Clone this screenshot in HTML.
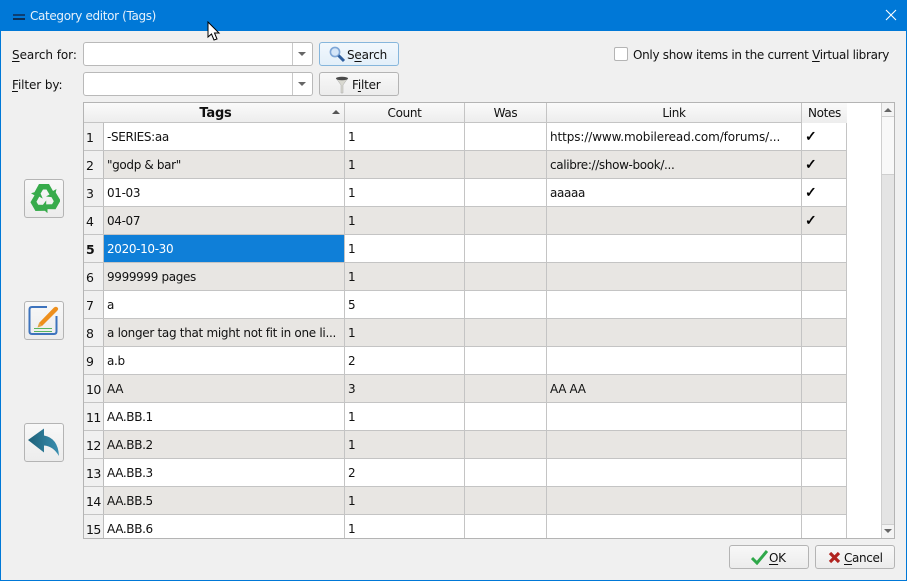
<!DOCTYPE html>
<html><head><meta charset="utf-8"><style>
html,body{margin:0;padding:0}
body{width:907px;height:581px;overflow:hidden;position:relative;background:#f0f0f0;font:12px "DejaVu Sans",sans-serif;color:#111;letter-spacing:-.35px}
div,span.a{position:absolute;box-sizing:border-box}
.t{white-space:nowrap;line-height:16px}
.btn{border:1px solid #b4b4b4;border-radius:3px;background:linear-gradient(#f8f8f8,#ececec)}
.inp{border:1px solid #b9b9b9;border-radius:3px;background:#fff}
.arr{width:0;height:0;border-left:4px solid transparent;border-right:4px solid transparent;border-top:4px solid #666}
.row{left:84px;width:763px;height:28px;border-bottom:1px solid #c4c4c4;background:#fff}
.row.e{background:#e8e6e3}
.vh{left:0;top:0;width:20px;height:27px;background:#f0f0f0;border-right:1px solid #bdbdbd;padding:7px 0 0 2px;line-height:16px;white-space:nowrap;font-size:12.5px;letter-spacing:-.6px}
.c{top:0;height:27px;border-right:1px solid #c4c4c4;padding:6px 0 0 3px;line-height:16px;white-space:nowrap}
.k{font-size:14px;-webkit-text-stroke:.5px #000;color:#000}
.hd{top:103px;height:20px;background:linear-gradient(#fafafa,#ededed);border-right:1px solid #c4c4c4;border-bottom:1px solid #c4c4c4;text-align:center;line-height:21px;white-space:nowrap}
u{text-decoration:underline;text-underline-offset:2px}
</style></head><body>
<div style="left:0;top:0;width:907px;height:31px;background:#0078d7"></div>
<div style="left:0;top:31px;width:1px;height:550px;background:#0078d7"></div>
<div style="left:906px;top:31px;width:1px;height:550px;background:#0078d7"></div>
<div style="left:0;top:580px;width:907px;height:1px;background:#0078d7"></div>
<div style="left:13px;top:14px;width:12px;height:2px;background:#0d3f73"></div>
<div style="left:13px;top:18px;width:12px;height:2px;background:#0d2f55"></div>
<div class="t" style="left:30px;top:8px;color:#e6f1fb">Category editor (Tags)</div>
<svg style="position:absolute;left:885px;top:9px" width="12" height="12"><path d="M1 1L11 11M11 1L1 11" stroke="#fff" stroke-width="1.1" fill="none"/></svg>

<div class="t" style="left:12px;top:47px;letter-spacing:-.05px"><u>S</u>earch for:</div>
<div class="t" style="left:12px;top:77px;letter-spacing:-.1px"><u>F</u>ilter by:</div>
<div class="inp" style="left:83px;top:42px;width:230px;height:24px"></div>
<div style="left:292px;top:43px;width:1px;height:22px;background:#c8c8c8"></div>
<div class="arr" style="left:298px;top:52px"></div>
<div class="inp" style="left:83px;top:72px;width:230px;height:24px"></div>
<div style="left:292px;top:73px;width:1px;height:22px;background:#c8c8c8"></div>
<div class="arr" style="left:298px;top:82px"></div>
<div class="btn" style="left:319px;top:42px;width:80px;height:24px;border-color:#86b6dc;background:linear-gradient(#f2f8fd,#e3eff9)"></div>
<svg style="position:absolute;left:328px;top:45px" width="18" height="18"><circle cx="7" cy="7" r="4.6" fill="#d5e6f8" stroke="#7fa6d6" stroke-width="1.6"/><path d="M10.5 10.5L16 16" stroke="#2f5f9f" stroke-width="3"/></svg>
<div class="t" style="left:347px;top:47px;letter-spacing:-.2px">S<u>e</u>arch</div>
<div class="btn" style="left:319px;top:72px;width:80px;height:24px"></div>
<svg style="position:absolute;left:335px;top:76px" width="14" height="18"><path d="M1 2H13L8 9V17H6V9Z" fill="#d8d8d0" stroke="#aaa" stroke-width=".5"/><ellipse cx="7" cy="2.500" rx="6" ry="1.800" fill="#4a4a4a"/></svg>
<div class="t" style="left:352px;top:77px;letter-spacing:-.2px">F<u>i</u>lter</div>
<div style="left:614px;top:47px;width:14px;height:14px;background:#fff;border:1px solid #b4b4b4;border-radius:2px"></div>
<div class="t" style="left:633px;top:47px;letter-spacing:-.31px">Only show items in the current <u>V</u>irtual library</div>

<div style="left:83px;top:102px;width:812px;height:437px;border:1px solid #b4b4b4;background:#fff"></div>
<div class="hd" style="left:84px;width:261px;font-weight:bold;font-size:13px;letter-spacing:-.2px;padding-left:4px;line-height:22px"><span style="margin-left:-1px">Tags</span></div>
<div style="left:332px;top:110px;width:0;height:0;border-left:4px solid transparent;border-right:4px solid transparent;border-bottom:4px solid #555"></div>
<div class="hd" style="left:345px;width:120px">Count</div>
<div class="hd" style="left:465px;width:82px">Was</div>
<div class="hd" style="left:547px;width:255px">Link</div>
<div class="hd" style="left:802px;width:45px;border-right:0;border-bottom:0">Notes</div>

<div class="row" style="top:123px"><div class="vh">1</div><div class="c" style="left:20px;width:241px">-SERIES:aa</div><div class="c" style="left:261px;width:120px">1</div><div class="c" style="left:381px;width:82px"></div><div class="c" style="left:463px;width:255px;letter-spacing:-.1px">https://www.mobileread.com/forums/...</div><div class="c k" style="left:718px;width:45px">✓</div></div>
<div class="row e" style="top:151px"><div class="vh">2</div><div class="c" style="left:20px;width:241px">"godp &amp; bar"</div><div class="c" style="left:261px;width:120px">1</div><div class="c" style="left:381px;width:82px"></div><div class="c" style="left:463px;width:255px">calibre://show-book/...</div><div class="c k" style="left:718px;width:45px">✓</div></div>
<div class="row" style="top:179px"><div class="vh">3</div><div class="c" style="left:20px;width:241px">01-03</div><div class="c" style="left:261px;width:120px">1</div><div class="c" style="left:381px;width:82px"></div><div class="c" style="left:463px;width:255px">aaaaa</div><div class="c k" style="left:718px;width:45px">✓</div></div>
<div class="row e" style="top:207px"><div class="vh">4</div><div class="c" style="left:20px;width:241px">04-07</div><div class="c" style="left:261px;width:120px">1</div><div class="c" style="left:381px;width:82px"></div><div class="c" style="left:463px;width:255px"></div><div class="c k" style="left:718px;width:45px">✓</div></div>
<div class="row" style="top:235px"><div class="vh" style="font-weight:bold">5</div><div class="c" style="left:20px;width:241px;background:#0f7fd8;color:#fff">2020-10-30</div><div class="c" style="left:261px;width:120px">1</div><div class="c" style="left:381px;width:82px"></div><div class="c" style="left:463px;width:255px"></div><div class="c" style="left:718px;width:45px"></div></div>
<div class="row e" style="top:263px"><div class="vh">6</div><div class="c" style="left:20px;width:241px">9999999 pages</div><div class="c" style="left:261px;width:120px">1</div><div class="c" style="left:381px;width:82px"></div><div class="c" style="left:463px;width:255px"></div><div class="c" style="left:718px;width:45px"></div></div>
<div class="row" style="top:291px"><div class="vh">7</div><div class="c" style="left:20px;width:241px">a</div><div class="c" style="left:261px;width:120px">5</div><div class="c" style="left:381px;width:82px"></div><div class="c" style="left:463px;width:255px"></div><div class="c" style="left:718px;width:45px"></div></div>
<div class="row e" style="top:319px"><div class="vh">8</div><div class="c" style="left:20px;width:241px;letter-spacing:-.3px">a longer tag that might not fit in one li...</div><div class="c" style="left:261px;width:120px">1</div><div class="c" style="left:381px;width:82px"></div><div class="c" style="left:463px;width:255px"></div><div class="c" style="left:718px;width:45px"></div></div>
<div class="row" style="top:347px"><div class="vh">9</div><div class="c" style="left:20px;width:241px">a.b</div><div class="c" style="left:261px;width:120px">2</div><div class="c" style="left:381px;width:82px"></div><div class="c" style="left:463px;width:255px"></div><div class="c" style="left:718px;width:45px"></div></div>
<div class="row e" style="top:375px"><div class="vh">10</div><div class="c" style="left:20px;width:241px">AA</div><div class="c" style="left:261px;width:120px">3</div><div class="c" style="left:381px;width:82px"></div><div class="c" style="left:463px;width:255px">AA AA</div><div class="c" style="left:718px;width:45px"></div></div>
<div class="row" style="top:403px"><div class="vh">11</div><div class="c" style="left:20px;width:241px">AA.BB.1</div><div class="c" style="left:261px;width:120px">1</div><div class="c" style="left:381px;width:82px"></div><div class="c" style="left:463px;width:255px"></div><div class="c" style="left:718px;width:45px"></div></div>
<div class="row e" style="top:431px"><div class="vh">12</div><div class="c" style="left:20px;width:241px">AA.BB.2</div><div class="c" style="left:261px;width:120px">1</div><div class="c" style="left:381px;width:82px"></div><div class="c" style="left:463px;width:255px"></div><div class="c" style="left:718px;width:45px"></div></div>
<div class="row" style="top:459px"><div class="vh">13</div><div class="c" style="left:20px;width:241px">AA.BB.3</div><div class="c" style="left:261px;width:120px">2</div><div class="c" style="left:381px;width:82px"></div><div class="c" style="left:463px;width:255px"></div><div class="c" style="left:718px;width:45px"></div></div>
<div class="row e" style="top:487px"><div class="vh">14</div><div class="c" style="left:20px;width:241px">AA.BB.5</div><div class="c" style="left:261px;width:120px">1</div><div class="c" style="left:381px;width:82px"></div><div class="c" style="left:463px;width:255px"></div><div class="c" style="left:718px;width:45px"></div></div>
<div class="row" style="top:515px;height:23px;border-bottom:0"><div class="vh" style="height:23px">15</div><div class="c" style="left:20px;width:241px;height:23px">AA.BB.6</div><div class="c" style="left:261px;width:120px;height:23px">1</div><div class="c" style="left:381px;width:82px;height:23px"></div><div class="c" style="left:463px;width:255px;height:23px"></div><div class="c" style="left:718px;width:45px;height:23px"></div></div>

<div style="left:881px;top:103px;width:13px;height:435px;background:#e4e4e4;border-left:1px solid #cfcfcf"></div>
<div style="left:881px;top:103px;width:13px;height:14px;background:#f4f4f4;border-left:1px solid #cfcfcf;border-bottom:1px solid #cfcfcf"></div>
<div style="left:881px;top:117px;width:13px;height:58px;background:#f8f8f8;border-left:1px solid #cfcfcf;border-bottom:1px solid #cfcfcf"></div>
<div style="left:881px;top:524px;width:13px;height:14px;background:#f4f4f4;border-left:1px solid #cfcfcf;border-top:1px solid #cfcfcf"></div>
<div style="left:884px;top:108px;width:0;height:0;border-left:4px solid transparent;border-right:4px solid transparent;border-bottom:4px solid #666"></div>
<div style="left:884px;top:529px;width:0;height:0;border-left:4px solid transparent;border-right:4px solid transparent;border-top:4px solid #666"></div>

<div class="btn" style="left:24px;top:179px;width:40px;height:39px"></div>
<svg style="position:absolute;left:30px;top:181px" width="30" height="32" viewBox="0 0 30 32"><defs></defs><g fill="#37ab4b"><path id="r1" d="M3.500 13L9 3H19L23 10L26.500 8L24.500 16.500L16 15.500L19.500 13.500L16.500 8.500H13L8.500 16Z"/><path d="M3.500 13L9 3H19L23 10L26.500 8L24.500 16.500L16 15.500L19.500 13.500L16.500 8.500H13L8.500 16Z" transform="rotate(120 15 17.500)"/><path d="M3.500 13L9 3H19L23 10L26.500 8L24.500 16.500L16 15.500L19.500 13.500L16.500 8.500H13L8.500 16Z" transform="rotate(240 15 17.500)"/></g></svg>
<div class="btn" style="left:24px;top:301px;width:40px;height:39px"></div>
<svg style="position:absolute;left:26px;top:303px" width="36" height="36" viewBox="0 0 36 36"><path d="M21 4H6Q3.500 4 3.500 6.500V28.500Q3.500 31 6 31H28Q30.500 31 30.500 28.500V13" fill="none" stroke="#3d73bd" stroke-width="2"/><path d="M13 20L28 4.500Q30 3 31.500 4.500Q33 6 31 8L16 23Z" fill="#ee8f1c"/><path d="M13 20L16 23L11.500 24.500Z" fill="#e0a040"/><path d="M8 25.500H26M8 28.500H26" stroke="#56b45e" stroke-width="1"/></svg>
<div class="btn" style="left:24px;top:423px;width:40px;height:39px"></div>
<svg style="position:absolute;left:27px;top:425px" width="34" height="34" viewBox="0 0 34 34"><defs><linearGradient id="g" x1="0" x2="1"><stop offset="0" stop-color="#1d6078"/><stop offset="1" stop-color="#3a8fb0"/></linearGradient></defs><path d="M1 15L17 3.500V10.500Q31 13 32 31Q26 21 17 20.500V27.500Z" fill="url(#g)"/></svg>

<div class="btn" style="left:729px;top:545px;width:80px;height:24px"></div>
<svg style="position:absolute;left:751px;top:549px" width="17" height="16"><path d="M1 9L6 14L16 2" stroke="#2fa84a" stroke-width="3" fill="none"/></svg>
<div class="t" style="left:769px;top:550px"><u>O</u>K</div>
<div class="btn" style="left:815px;top:545px;width:80px;height:24px"></div>
<svg style="position:absolute;left:828px;top:551px" width="13" height="13"><path d="M2 2L11 11M11 2L2 11" stroke="#b0231f" stroke-width="3.2"/></svg>
<div class="t" style="left:844px;top:550px"><u>C</u>ancel</div>

<svg style="position:absolute;left:207px;top:21px" width="15" height="21"><path d="M1 1V16L4.500 13L7 19L10 18L7.500 12H12Z" fill="#fff" stroke="#000"/></svg>
</body></html>
